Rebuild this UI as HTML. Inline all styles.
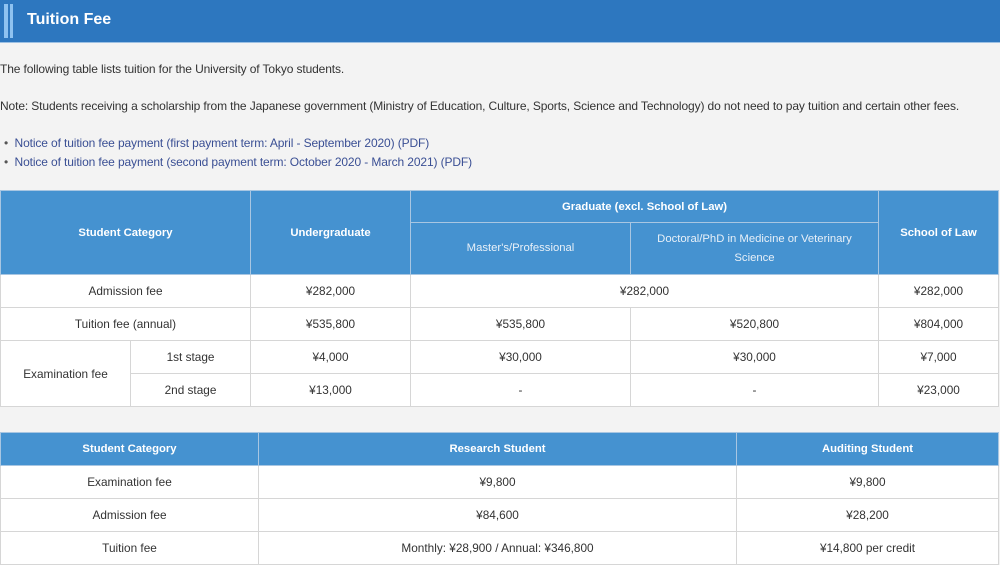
<!DOCTYPE html><html><head><style>
body{margin:0;width:1000px;height:565px;overflow:hidden;background:#f3f3f3;font-family:"Liberation Sans",sans-serif;color:#333;}
.hd{position:absolute;left:0;top:0;width:1000px;height:42px;background:#2d77bf;border-bottom:1px solid #9cc0e3;}
.hd .b1{position:absolute;left:4px;top:4px;width:4px;height:34px;background:#8ec2f0}
.hd .b2{position:absolute;left:10px;top:4px;width:3px;height:34px;background:#8ec2f0}
.hd h1{position:absolute;left:27px;top:11px;margin:0;font-size:16px;color:#fff;font-weight:bold}
p{position:absolute;left:0;margin:0;font-size:12px;letter-spacing:-0.12px}
a{color:#3a4f94;text-decoration:none}
table{position:absolute;left:0;border-collapse:collapse;table-layout:fixed;font-size:11.8px;}
td,th{border:1px solid #d6d6d6;text-align:center;padding:0;background:#fff}
th{background:#4592d0;color:#fff;font-weight:bold;border-color:#a8c6e2;font-size:11.3px}
th.n{font-weight:normal;color:#e8f0f8;line-height:19px}
</style></head><body>
<div class="hd"><div class="b1"></div><div class="b2"></div><h1>Tuition Fee</h1></div>
<p style="top:62px">The following table lists tuition for the University of Tokyo students.</p>
<p style="top:99px">Note: Students receiving a scholarship from the Japanese government (Ministry of Education, Culture, Sports, Science and Technology) do not need to pay tuition and certain other fees.</p>
<p style="top:136px;left:4px"><span style="color:#555">•</span>&nbsp; <a>Notice of tuition fee payment (first payment term: April - September 2020) (PDF)</a></p>
<p style="top:155px;left:4px"><span style="color:#555">•</span>&nbsp; <a>Notice of tuition fee payment (second payment term: October 2020 - March 2021) (PDF)</a></p>
<table style="top:190px;width:998px">
<colgroup><col style="width:130px"><col style="width:120px"><col style="width:160px"><col style="width:220px"><col style="width:248px"><col style="width:120px"></colgroup>
<tr style="height:32px"><th colspan="2" rowspan="2">Student Category</th><th rowspan="2">Undergraduate</th><th colspan="2">Graduate (excl. School of Law)</th><th rowspan="2">School of Law</th></tr>
<tr style="height:52px"><th class="n">Master's/Professional</th><th class="n">Doctoral/PhD in Medicine or Veterinary<br>Science</th></tr>
<tr style="height:33px"><td colspan="2">Admission fee</td><td>¥282,000</td><td colspan="2">¥282,000</td><td>¥282,000</td></tr>
<tr style="height:33px"><td colspan="2">Tuition fee (annual)</td><td>¥535,800</td><td>¥535,800</td><td>¥520,800</td><td>¥804,000</td></tr>
<tr style="height:33px"><td rowspan="2">Examination fee</td><td>1st stage</td><td>¥4,000</td><td>¥30,000</td><td>¥30,000</td><td>¥7,000</td></tr>
<tr style="height:33px"><td>2nd stage</td><td>¥13,000</td><td>-</td><td>-</td><td>¥23,000</td></tr>
</table>
<table style="top:432px;width:998px">
<colgroup><col style="width:258px"><col style="width:478px"><col style="width:262px"></colgroup>
<tr style="height:33px"><th>Student Category</th><th>Research Student</th><th>Auditing Student</th></tr>
<tr style="height:33px"><td>Examination fee</td><td>¥9,800</td><td>¥9,800</td></tr>
<tr style="height:33px"><td>Admission fee</td><td>¥84,600</td><td>¥28,200</td></tr>
<tr style="height:33px"><td>Tuition fee</td><td>Monthly: ¥28,900 / Annual: ¥346,800</td><td>¥14,800 per credit</td></tr>
</table>
</body></html>
